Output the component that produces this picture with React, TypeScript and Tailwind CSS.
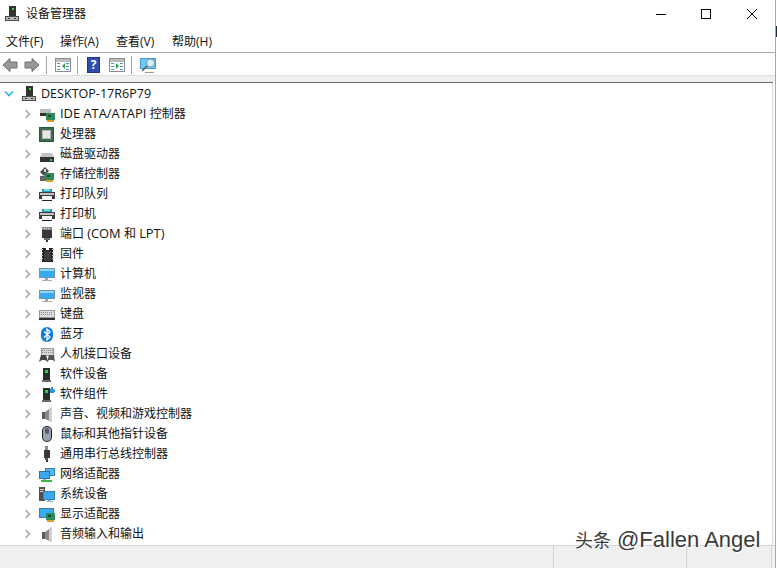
import { ReactNode } from "react";

const font = { fontFamily: '"Open Sans", "Noto Sans CJK SC", sans-serif' };

function Ico({ children, w = 16, h = 16 }: { children: ReactNode; w?: number; h?: number }) {
  return (
    <svg width={w} height={h} viewBox={`0 0 ${w} ${h}`} className="shrink-0" shapeRendering="crispEdges">
      {children}
    </svg>
  );
}

function Board({ x = 7, y = 6 }: { x?: number; y?: number }) {
  return (
    <g>
      <rect x={x} y={y} width="9" height="7" fill="#2f8a57" />
      <rect x={x + 2} y={y + 2} width="3" height="2" fill="#154a2c" />
      <rect x={x + 1} y={y + 7} width="7" height="2" fill="#e0a020" />
    </g>
  );
}

function Tower() {
  return (
    <g>
      <rect x="5" y="0" width="7" height="10" fill="#333" />
      <rect x="8" y="2" width="2" height="2" fill="#35d04a" />
      <rect x="1" y="10" width="14" height="5" fill="#4a4a4a" />
      <rect x="2" y="11" width="12" height="3" fill="#b9b9b9" />
      <rect x="4" y="12" width="2" height="1" fill="#333" />
      <rect x="10" y="12" width="2" height="1" fill="#333" />
    </g>
  );
}

function Screen({ x = 0, y = 1, w = 16, h = 11 }: { x?: number; y?: number; w?: number; h?: number }) {
  return (
    <g>
      <rect x={x} y={y} width={w} height={h} fill="#6a94b0" />
      <rect x={x + 1} y={y + 1} width={w - 2} height={h - 2} fill="#38aaf2" />
      <rect x={x + 1} y={y + 1} width={w - 2} height={2} fill="#8fd2fa" />
      <rect x={x + w / 2 - 2} y={y + h} width="3" height="2" fill="#8fa9ba" />
      <rect x={x + w / 2 - 5} y={y + h + 2} width="10" height="1" fill="#a0b3c0" />
    </g>
  );
}

function Speaker() {
  return (
    <g>
      <rect x="3" y="6" width="4" height="7" fill="#5c5c5c" />
      <path d="M6 6 L13 1 L13 16 L6 13 Z" fill="#8a8a8a" shapeRendering="auto" />
      <path d="M10 3.5 L13 1 L13 16 L10 14.5 Z" fill="#cfcfcf" shapeRendering="auto" />
    </g>
  );
}

function Printer() {
  return (
    <g>
      <rect x="3" y="3" width="10" height="3" fill="#2f95c8" />
      <rect x="5" y="3" width="6" height="2" fill="#6fe0b8" />
      <rect x="0" y="6" width="16" height="7" fill="#3c3c3c" />
      <rect x="1" y="7" width="14" height="2" fill="#c4c4c4" />
      <rect x="3" y="10" width="10" height="4" fill="#f6f6f6" />
      <rect x="3" y="14" width="10" height="1" fill="#222" />
    </g>
  );
}

const icons: Record<string, ReactNode> = {
  ide: (
    <Ico>
      <rect x="1" y="3" width="11" height="4" fill="#bdbdbd" />
      <rect x="1" y="7" width="8" height="3" fill="#333" />
      <Board x={7} y={7} />
    </Ico>
  ),
  cpu: (
    <Ico>
      <rect x="0" y="1" width="15" height="15" fill="#2a5a3e" />
      <rect x="1" y="2" width="13" height="13" fill="#3a6e4e" />
      <rect x="3" y="4" width="9" height="9" fill="#b8b8b8" />
      <rect x="4" y="5" width="7" height="7" fill="#e6e6e6" />
    </Ico>
  ),
  disk: (
    <Ico>
      <path d="M3 7 L13 7 L15 11 L1 11 Z" fill="#c4c4c4" shapeRendering="auto" />
      <rect x="1" y="11" width="14" height="5" fill="#333" />
      <rect x="11" y="13" width="2" height="2" fill="#35d04a" />
    </Ico>
  ),
  storage: (
    <Ico>
      <path d="M1 6 L6 1 L10 5 L5 10 Z" fill="#4a4a4a" shapeRendering="auto" />
      <rect x="5" y="3" width="2" height="3" fill="#ddd" />
      <rect x="1" y="10" width="8" height="5" fill="#666" />
      <Board x={6} y={7} />
    </Ico>
  ),
  printer: <Ico><Printer /></Ico>,
  port: (
    <Ico>
      <rect x="3" y="1" width="10" height="3" fill="#8a8a8a" />
      <rect x="3" y="4" width="10" height="8" fill="#383838" />
      <rect x="5" y="2" width="1" height="1" fill="#eee" />
      <rect x="7" y="2" width="1" height="1" fill="#eee" />
      <rect x="9" y="2" width="1" height="1" fill="#eee" />
      <rect x="5" y="12" width="6" height="2" fill="#666" />
      <rect x="7" y="14" width="2" height="2" fill="#333" />
    </Ico>
  ),
  firmware: (
    <Ico>
      <rect x="3" y="2" width="11" height="14" fill="#222" />
      <rect x="7" y="2" width="3" height="2" fill="#fff" />
      <rect x="5" y="5" width="7" height="10" fill="#3c3c3c" />
      {[3, 6, 9, 12].map((y) => (
        <g key={y}>
          <rect x="2" y={y} width="2" height="1" fill="#c8c8c8" />
          <rect x="13" y={y} width="2" height="1" fill="#c8c8c8" />
        </g>
      ))}
    </Ico>
  ),
  computer: <Ico><Screen y={2} h={10} /></Ico>,
  monitor: <Ico><Screen y={4} h={9} /></Ico>,
  keyboard: (
    <Ico>
      <rect x="0" y="4" width="16" height="10" fill="#9c9c9c" />
      <rect x="1" y="5" width="14" height="6" fill="#dcdcdc" />
      <path d="M2 6.5 H14 M2 8.5 H14" stroke="#8c8c8c" strokeDasharray="1 1" />
      <rect x="0" y="12" width="16" height="2" fill="#2e2e2e" />
    </Ico>
  ),
  bluetooth: (
    <Ico>
      <rect x="2" y="1" width="12" height="15" rx="6" fill="#0a7ce6" shapeRendering="auto" />
      <path d="M5 5.5 L11 11 L8 14 L8 3 L11 6 L5 11.5" stroke="#fff" strokeWidth="1.3" fill="none" shapeRendering="auto" />
    </Ico>
  ),
  hid: (
    <Ico>
      <rect x="2" y="2" width="13" height="8" fill="#9c9c9c" />
      <rect x="3" y="3" width="11" height="6" fill="#d8d8d8" />
      <path d="M3 4.5 H14 M3 6.5 H14" stroke="#888" strokeDasharray="1 1" />
      <path d="M0 16 L2 9 L7 9 L9 16 L6 14 L3 14 Z" fill="#444" shapeRendering="auto" />
      <path d="M8 16 L10 9 L15 9 L16 16 L14 14 L10 14 Z" fill="#555" shapeRendering="auto" />
    </Ico>
  ),
  software: (
    <Ico>
      <rect x="4" y="2" width="7" height="12" fill="#243029" />
      <rect x="6" y="4" width="3" height="3" fill="#35d04a" />
      <rect x="3" y="14" width="9" height="2" fill="#6a6a6a" />
    </Ico>
  ),
  component: (
    <Ico>
      <rect x="4" y="2" width="7" height="12" fill="#243029" />
      <rect x="6" y="4" width="3" height="3" fill="#35d04a" />
      <rect x="3" y="14" width="9" height="2" fill="#6a6a6a" />
      <rect x="11" y="3" width="4" height="4" fill="#2b8ee0" />
      <rect x="12" y="1" width="2" height="2" fill="#2b8ee0" />
      <rect x="15" y="4" width="1" height="2" fill="#2b8ee0" />
    </Ico>
  ),
  sound: <Ico><Speaker /></Ico>,
  mouse: (
    <Ico>
      <rect x="3" y="0" width="10" height="16" rx="5" fill="#1e1e1e" shapeRendering="auto" />
      <rect x="4" y="1" width="8" height="14" rx="4" fill="#9aa4b0" shapeRendering="auto" />
      <rect x="6" y="2" width="4" height="6" rx="2" fill="#4f5b68" shapeRendering="auto" />
    </Ico>
  ),
  usb: (
    <Ico>
      <rect x="6" y="0" width="3" height="4" fill="#8a8a8a" />
      <rect x="5" y="4" width="6" height="8" fill="#383838" />
      <rect x="6" y="12" width="3" height="2" fill="#555" />
      <rect x="7" y="14" width="2" height="2" fill="#333" />
    </Ico>
  ),
  network: (
    <Ico>
      <rect x="6" y="2" width="10" height="8" fill="#3d7fa8" />
      <rect x="7" y="3" width="8" height="6" fill="#4ab8f5" />
      <rect x="0" y="5" width="11" height="8" fill="#2f739c" />
      <rect x="1" y="6" width="9" height="6" fill="#38aaf2" />
      <rect x="4" y="13" width="3" height="1" fill="#8fb0c4" />
      <rect x="2" y="14" width="11" height="2" fill="#3fb84a" />
    </Ico>
  ),
  system: (
    <Ico>
      <rect x="0" y="1" width="6" height="14" fill="#4f4f4f" />
      <rect x="1" y="3" width="4" height="1" fill="#ddd" />
      <rect x="1" y="5" width="4" height="1" fill="#ddd" />
      <rect x="4" y="5" width="12" height="9" fill="#3d7fa8" />
      <rect x="5" y="6" width="10" height="7" fill="#38aaf2" />
      <rect x="9" y="14" width="3" height="1" fill="#8fb0c4" />
      <rect x="7" y="15" width="7" height="1" fill="#a0b3c0" />
    </Ico>
  ),
  display: (
    <Ico>
      <rect x="0" y="2" width="15" height="10" fill="#3d7fa8" />
      <rect x="1" y="3" width="13" height="8" fill="#38aaf2" />
      <Board x={7} y={7} />
    </Ico>
  ),
};

const rows: [string, ReactNode][] = [
  ["ide", <><span className="text-[12.9px]">IDE ATA/ATAPI </span>控制器</>],
  ["cpu", "处理器"],
  ["disk", "磁盘驱动器"],
  ["storage", "存储控制器"],
  ["printer", "打印队列"],
  ["printer", "打印机"],
  ["port", <>端口 <span className="text-[12.9px]">(COM </span>和 <span className="text-[12.9px]">LPT)</span></>],
  ["firmware", "固件"],
  ["computer", "计算机"],
  ["monitor", "监视器"],
  ["keyboard", "键盘"],
  ["bluetooth", "蓝牙"],
  ["hid", "人机接口设备"],
  ["software", "软件设备"],
  ["component", "软件组件"],
  ["sound", "声音、视频和游戏控制器"],
  ["mouse", "鼠标和其他指针设备"],
  ["usb", "通用串行总线控制器"],
  ["network", "网络适配器"],
  ["system", "系统设备"],
  ["display", "显示适配器"],
  ["sound", "音频输入和输出"],
];

function ArrowBtn({ flip }: { flip?: boolean }) {
  return (
    <svg width="16" height="16" viewBox="0 0 16 16" className={flip ? "-scale-x-100" : ""}>
      <path d="M1 8 L8 1.5 V5 H15 V11 H8 V14.5 Z" fill="#999" stroke="#6e6e6e" />
    </svg>
  );
}

function PaneIcon({ green }: { green?: boolean }) {
  return (
    <svg width="16" height="14" viewBox="0 0 16 14" shapeRendering="crispEdges">
      <rect x="0.5" y="0.5" width="15" height="13" fill="#fff" stroke="#8c8c8c" />
      <rect x="1" y="1" width="14" height="3" fill="#bcbcbc" />
      <rect x="2" y="5" width="3" height="1" fill="#4a90d0" />
      <rect x="2" y="8" width="3" height="1" fill="#4a90d0" />
      <rect x="2" y="11" width="3" height="1" fill="#4a90d0" />
      <rect x="11" y="5" width="3" height="1" fill="#4a90d0" />
      <rect x="11" y="8" width="3" height="1" fill="#4a90d0" />
      <rect x="11" y="11" width="3" height="1" fill="#4a90d0" />
      <path d={green ? "M7 5 L10 8 L7 11 Z" : "M10 5 L7 8 L10 11 Z"} fill="#2fa83c" shapeRendering="auto" />
    </svg>
  );
}

function Sep() {
  return <div className="w-px h-[18px] bg-[#a0a0a0]" />;
}

export default function App() {
  return (
    <div className="relative w-[777px] h-[568px] overflow-hidden bg-white text-[12px] text-[#111]" style={font}>
      <div className="flex flex-col h-full w-[776px] border-r border-[#a8a8a8]">
        {/* title bar */}
        <div className="flex items-center h-[28px] pl-[4px] shrink-0">
          <Ico w={16} h={16}><Tower /></Ico>
          <span className="ml-[6px]">设备管理器</span>
          <div className="ml-auto flex items-center pr-[18px]">
            <div className="w-[10px] h-px bg-black" />
            <div className="ml-[35px] w-[10px] h-[10px] border border-black" />
            <svg className="ml-[36px]" width="10" height="10" viewBox="0 0 10 10">
              <path d="M0 0 L10 10 M10 0 L0 10" stroke="#000" strokeWidth="1" />
            </svg>
          </div>
        </div>

        {/* menu */}
        <div className="flex items-center h-[25px] pl-[6px] pt-[3px] border-b border-[#a8a8a8] shrink-0">
          <span className="w-[54px]">文件(F)</span>
          <span className="w-[56px]">操作(A)</span>
          <span className="w-[56px]">查看(V)</span>
          <span>帮助(H)</span>
        </div>

        {/* toolbar */}
        <div className="flex items-center h-[22px] pl-[2px] pt-[2px] shrink-0">
          <ArrowBtn />
          <div className="ml-[6px]"><ArrowBtn flip /></div>
          <div className="ml-[6px]"><Sep /></div>
          <div className="ml-[8px]"><PaneIcon /></div>
          <div className="ml-[6px]"><Sep /></div>
          <div className="ml-[9px] flex items-center justify-center w-[13px] h-[16px] bg-[#2f4fb0] border border-[#1f3580] text-white font-bold text-[12px] leading-none">?</div>
          <div className="ml-[9px]"><PaneIcon green /></div>
          <div className="ml-[6px]"><Sep /></div>
          <svg className="ml-[8px]" width="17" height="17" viewBox="0 0 17 17">
            <rect x="0.5" y="1.5" width="15" height="10" fill="#6ccaf5" stroke="#4f98c4" />
            <circle cx="10.5" cy="6" r="4" fill="#d8f0fb" stroke="#6a98ae" />
            <path d="M7 9 L2 14" stroke="#555" strokeWidth="1.5" />
            <path d="M5 15.5 H14" stroke="#999" />
          </svg>
        </div>

        {/* gray band */}
        <div className="h-[7px] bg-[#f0f0f0] border-t border-[#e0e0e0] shrink-0" />
        <div className="h-px mr-[2px] bg-[#696969] shrink-0" />

        {/* tree */}
        <div className="flex-1 min-h-0 mr-[2px] pt-[1px] border-r border-[#d8d8d8]">
          <div className="flex items-center h-[20px]">
            <svg className="ml-[4px]" width="10" height="6" viewBox="0 0 10 6">
              <path d="M1 0.5 L5 4.5 L9 0.5" stroke="#26b4e8" strokeWidth="1.6" fill="none" />
            </svg>
            <div className="ml-[7px]"><Ico><Tower /></Ico></div>
            <span className="ml-[4px] text-[12.55px]">DESKTOP-17R6P79</span>
          </div>
          {rows.map(([icon, label], i) => (
            <div key={i} className="flex items-center h-[20px]">
              <svg className="ml-[25px]" width="6" height="10" viewBox="0 0 6 10">
                <path d="M0.5 1 L4.5 5 L0.5 9" stroke="#a6a6a6" strokeWidth="1.5" fill="none" />
              </svg>
              <div className="ml-[8px] flex">{icons[icon]}</div>
              <span className="ml-[5px]">{label}</span>
            </div>
          ))}
        </div>

        {/* status bar */}
        <div className="flex h-[23px] shrink-0 bg-[#f0f0f0] border-t border-[#d4d4d4]">
          <div className="w-[554px] border-r border-[#d4d4d4]" />
          <div className="w-[133px] border-r border-[#d4d4d4]" />
          <div className="w-[85px] border-r border-[#d4d4d4]" />
        </div>
      </div>

      {/* sliver of the window behind */}
      <div className="absolute left-[776px] top-[26px] w-px h-[11px] bg-[#1a2a3a]" />

      {/* watermark */}
      <div
        className="absolute left-[575px] top-[528px] text-[18px] leading-[24px] text-[#3a3a3a] whitespace-nowrap [text-shadow:0_0_2px_#fff,1px_1px_1px_#fff]"
        style={{ fontFamily: '"Liberation Sans", "Noto Sans CJK SC", sans-serif' }}
      >
        头条<span className="ml-[6px] text-[22px]">@Fallen Angel</span>
      </div>
    </div>
  );
}
